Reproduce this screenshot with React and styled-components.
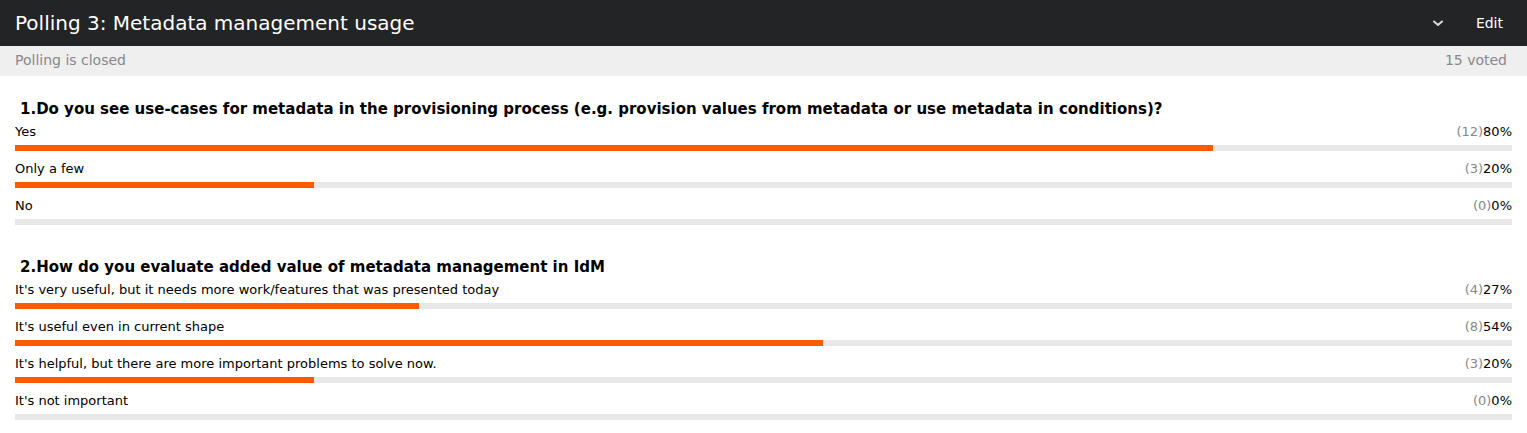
import React from 'react';
import styled, { createGlobalStyle } from 'styled-components';

const GlobalStyle = createGlobalStyle`
  body {
    margin: 0;
    background: #fff;
    font-family: "DejaVu Sans", "Liberation Sans", sans-serif;
  }
`;

const Header = styled.div`
  display: flex;
  align-items: center;
  height: 46px;
  padding: 0 15px;
  background: #232425;
  color: #fff;
`;

const Title = styled.h1`
  flex: 1;
  margin: 0;
  font-size: 20px;
  font-weight: normal;
`;

const Toggle = styled.span`
  display: flex;
  align-items: center;
  margin-right: 31px;
  color: #ddd;
`;

const EditButton = styled.span`
  font-size: 14px;
  margin-right: 9px;
`;

const Status = styled.div`
  display: flex;
  justify-content: space-between;
  align-items: center;
  height: 28px;
  padding: 0 20px 2px 15px;
  background: #efefef;
  color: #888;
  font-size: 14px;
`;

const Body = styled.div`
  padding: 0 15px;
`;

const Question = styled.section`
  padding: 23px 0 2px;
`;

const QuestionTitle = styled.h2`
  margin: 0 0 1px;
  padding-left: 5px;
  font-size: 15px;
  line-height: 21px;
  font-weight: bold;
  color: #000;
`;

const Row = styled.div`
  padding-bottom: 7px;
`;

const RowHead = styled.div`
  display: flex;
  justify-content: space-between;
  font-size: 13px;
  line-height: 21px;
  color: #000;
`;

const Count = styled.span`
  color: #888;
`;

const Track = styled.div`
  margin-top: 3px;
  height: 6px;
  background: #e8e8e8;
`;

const Fill = styled.div`
  height: 100%;
  background: #ff5a00;
`;

const questions = [
  {
    title: '1.Do you see use-cases for metadata in the provisioning process (e.g. provision values from metadata or use metadata in conditions)?',
    options: [
      { label: 'Yes', count: 12, pct: 80 },
      { label: 'Only a few', count: 3, pct: 20 },
      { label: 'No', count: 0, pct: 0 },
    ],
  },
  {
    title: '2.How do you evaluate added value of metadata management in IdM',
    options: [
      { label: "It's very useful, but it needs more work/features that was presented today", count: 4, pct: 27 },
      { label: "It's useful even in current shape", count: 8, pct: 54 },
      { label: "It's helpful, but there are more important problems to solve now.", count: 3, pct: 20 },
      { label: "It's not important", count: 0, pct: 0 },
    ],
  },
];

export default function App() {
  return (
    <>
      <GlobalStyle />
      <Header>
        <Title>Polling 3: Metadata management usage</Title>
        <Toggle>
          <svg width="14" height="14" viewBox="0 0 14 14" fill="none" stroke="currentColor" strokeWidth="2" strokeLinecap="round">
            <path d="M3 5.5l4 3.5 4-3.5" />
          </svg>
        </Toggle>
        <EditButton>Edit</EditButton>
      </Header>
      <Status>
        <span>Polling is closed</span>
        <span>15 voted</span>
      </Status>
      <Body>
        {questions.map((q) => (
          <Question key={q.title}>
            <QuestionTitle>{q.title}</QuestionTitle>
            {q.options.map((o) => (
              <Row key={o.label}>
                <RowHead>
                  <span>{o.label}</span>
                  <span>
                    <Count>({o.count})</Count>
                    {o.pct}%
                  </span>
                </RowHead>
                <Track>
                  <Fill style={{ width: `${o.pct}%` }} />
                </Track>
              </Row>
            ))}
          </Question>
        ))}
      </Body>
    </>
  );
}
